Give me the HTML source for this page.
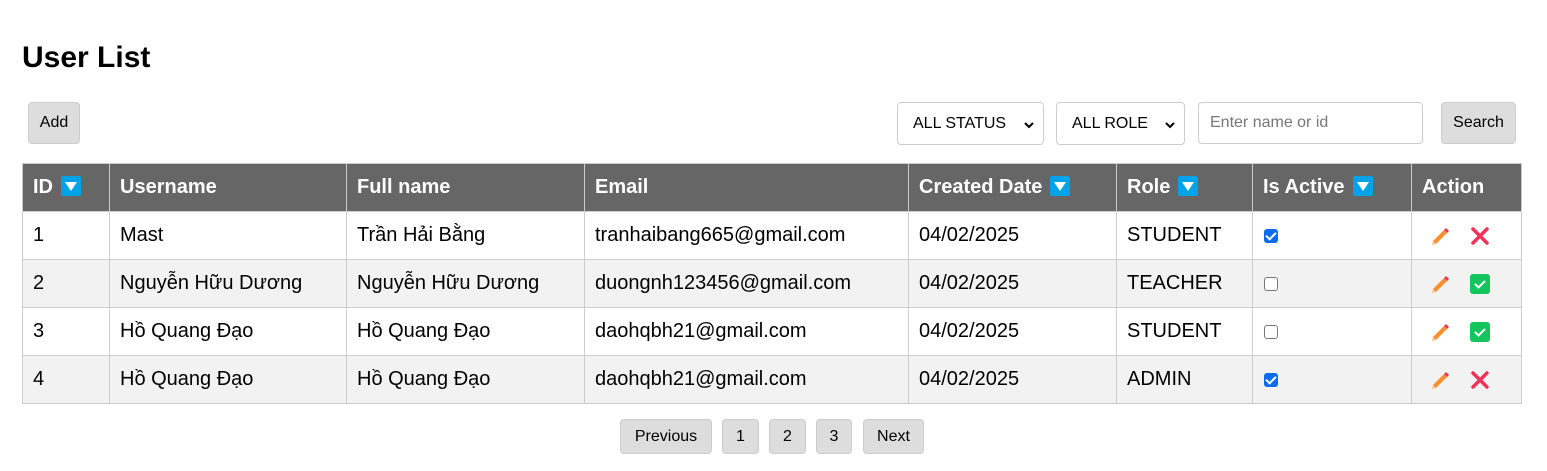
<!DOCTYPE html>
<html><head><meta charset="utf-8"><style>
body{margin:0;width:1547px;height:471px;background:#fff;font-family:"Liberation Sans",Arial,sans-serif;position:relative;overflow:hidden}
.a{position:absolute;box-sizing:border-box}
h1{position:absolute;left:22px;top:41px;margin:0;font-size:30px;font-weight:bold}
.btn{background:#ddd;border:1px solid #ccc;border-radius:4px;font-size:16px;display:flex;align-items:center;justify-content:center;color:#000}
.sel{border:1px solid #ccc;border-radius:4px;font-size:16px;display:flex;align-items:center;padding-left:15px;background:#fff}
.sel svg{position:absolute;right:9px;top:19px}
table{position:absolute;left:22px;top:163px;border-collapse:collapse;width:1500px;font-size:20px}
td,th{border:1px solid #ccc;height:48px;padding:0 0 0 10px;text-align:left;box-sizing:border-box}
th{background:#666;color:#fff;font-weight:bold;font-size:20px;border-color:#ccc}
tr:nth-child(odd) td{background:#f2f2f2}
.s{display:inline-block;width:20px;height:20px;background:#00a2e8;border-radius:2px;vertical-align:-3px;margin-left:8px;position:relative}
.s:after{content:"";position:absolute;left:4px;top:6px;border-left:6px solid transparent;border-right:6px solid transparent;border-top:9px solid #fff}
.cb{display:inline-block;width:14px;height:14px;border-radius:3px;box-sizing:border-box;vertical-align:middle;margin-left:1px}
.on{background:#0b6cf0;position:relative}
.on:after{content:"";position:absolute;left:4px;top:1px;width:4px;height:8px;border:solid #fff;border-width:0 2px 2px 0;transform:rotate(45deg)}
.off{border:1px solid #777;background:#fff}
.ic{display:inline-flex;gap:18px;align-items:center;margin-left:8px;vertical-align:middle}
</style></head><body>
<h1>User List</h1>
<div class="a btn" style="left:28px;top:102px;width:52px;height:42px">Add</div>
<div class="a sel" style="left:897px;top:102px;width:147px;height:43px">ALL STATUS<svg width="10" height="7" viewBox="0 0 10 7"><path d="M1 1l4 4 4-4" stroke="#000" stroke-width="2" fill="none"/></svg></div>
<div class="a sel" style="left:1056px;top:102px;width:129px;height:43px">ALL ROLE<svg width="10" height="7" viewBox="0 0 10 7"><path d="M1 1l4 4 4-4" stroke="#000" stroke-width="2" fill="none"/></svg></div>
<div class="a sel" style="left:1198px;top:102px;width:225px;height:42px;padding-left:11px;color:#777">Enter name or id</div>
<div class="a btn" style="left:1441px;top:102px;width:75px;height:42px">Search</div>
<table>
<tr><th style="width:87px">ID<span class="s"></span></th><th style="width:237px">Username</th><th style="width:238px">Full name</th><th style="width:324px">Email</th><th style="width:208px">Created Date<span class="s"></span></th><th style="width:136px">Role<span class="s"></span></th><th style="width:159px">Is Active<span class="s"></span></th><th>Action</th></tr>
<tr><td>1</td><td>Mast</td><td>Trần Hải Bằng</td><td>tranhaibang665@gmail.com</td><td>04/02/2025</td><td>STUDENT</td><td><span class="cb on"></span></td><td><span class="ic">PENCIL<svg width="20" height="20" viewBox="0 0 20 20"><path d="M3 3L17 17M17 3L3 17" stroke="#f0325a" stroke-width="3.5" stroke-linecap="round"/></svg></span></td></tr>
<tr><td>2</td><td>Nguyễn Hữu Dương</td><td>Nguyễn Hữu Dương</td><td>duongnh123456@gmail.com</td><td>04/02/2025</td><td>TEACHER</td><td><span class="cb off"></span></td><td><span class="ic">PENCIL<svg width="20" height="20" viewBox="0 0 20 20"><rect width="20" height="20" rx="3" fill="#13c55c"/><path d="M5 10l3.5 3.5L15 7" stroke="#fff" stroke-width="2" fill="none"/></svg></span></td></tr>
<tr><td>3</td><td>Hồ Quang Đạo</td><td>Hồ Quang Đạo</td><td>daohqbh21@gmail.com</td><td>04/02/2025</td><td>STUDENT</td><td><span class="cb off"></span></td><td><span class="ic">PENCIL<svg width="20" height="20" viewBox="0 0 20 20"><rect width="20" height="20" rx="3" fill="#13c55c"/><path d="M5 10l3.5 3.5L15 7" stroke="#fff" stroke-width="2" fill="none"/></svg></span></td></tr>
<tr><td>4</td><td>Hồ Quang Đạo</td><td>Hồ Quang Đạo</td><td>daohqbh21@gmail.com</td><td>04/02/2025</td><td>ADMIN</td><td><span class="cb on"></span></td><td><span class="ic">PENCIL<svg width="20" height="20" viewBox="0 0 20 20"><path d="M3 3L17 17M17 3L3 17" stroke="#f0325a" stroke-width="3.5" stroke-linecap="round"/></svg></span></td></tr>
</table>
<div class="a btn" style="left:620px;top:419px;width:92px;height:35px">Previous</div>
<div class="a btn" style="left:722px;top:419px;width:37px;height:35px">1</div>
<div class="a btn" style="left:769px;top:419px;width:37px;height:35px">2</div>
<div class="a btn" style="left:816px;top:419px;width:36px;height:35px">3</div>
<div class="a btn" style="left:863px;top:419px;width:61px;height:35px">Next</div>
<script>
var p='<svg width="22" height="22" viewBox="0 0 22 22"><path d="M3 16L14 5l3 3L6 19z" fill="#f7902f"/><path d="M14 5l2-2 3 3-2 2z" fill="#f0325a"/><path d="M3 16l3 3-4 1z" fill="#f5c08a"/></svg>';
document.querySelectorAll('.ic').forEach(function(e){e.innerHTML=e.innerHTML.replace('PENCIL',p)});
</script>
</body></html>
